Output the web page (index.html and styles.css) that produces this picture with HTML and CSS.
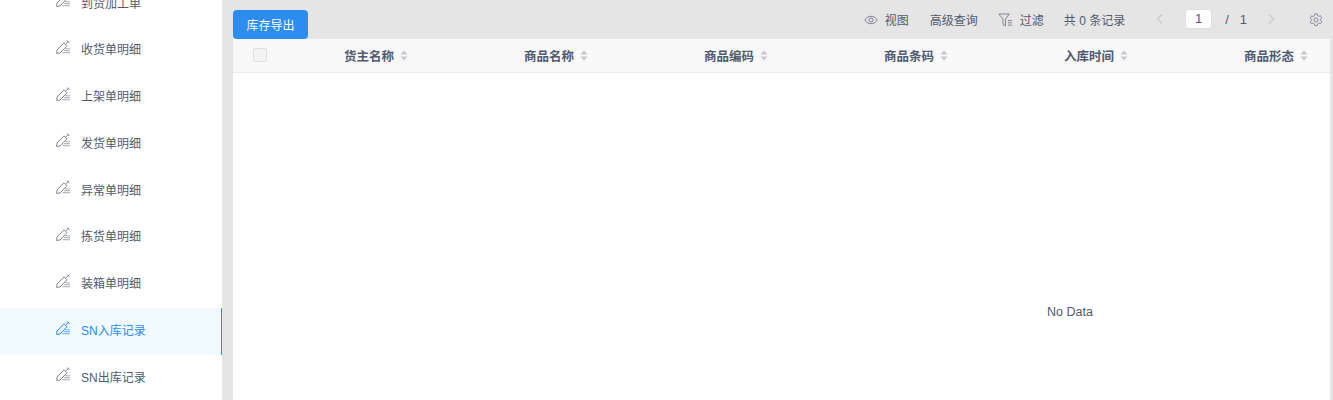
FILE: index.html
```html
<!DOCTYPE html>
<html lang="zh-CN">
<head>
<meta charset="utf-8">
<title>SN入库记录</title>
<link rel="stylesheet" href="styles.css">
</head>
<body>
<svg class="sprite" width="0" height="0" aria-hidden="true">
  <symbol id="i-edit" viewBox="0 0 14 14">
    <path d="M.6 13.400 1 10 8 2.800 11 5.800 4 13z" fill="none" stroke="currentColor" stroke-width="1"/>
    <path d="M9.600 4.200 12.800 1M11 .5l2.500 2.500" fill="none" stroke="currentColor" stroke-width="1"/>
    <path d="M9.200 8.800H14M8 10.700h6M6.400 12.700H14" fill="none" stroke="currentColor" stroke-width=".7"/>
  </symbol>
  <symbol id="i-sort" viewBox="0 0 8 11">
    <path d="M4 .5 7.500 4.500H.5zM4 10.500.5 6.500h7z" fill="currentColor"/>
  </symbol>
</svg>
<div class="app">
  <nav class="side">
    <ul class="menu">
      <li class="item"><svg class="ico"><use href="#i-edit"/></svg><span>到货加工单</span></li>
      <li class="item"><svg class="ico"><use href="#i-edit"/></svg><span>收货单明细</span></li>
      <li class="item"><svg class="ico"><use href="#i-edit"/></svg><span>上架单明细</span></li>
      <li class="item"><svg class="ico"><use href="#i-edit"/></svg><span>发货单明细</span></li>
      <li class="item"><svg class="ico"><use href="#i-edit"/></svg><span>异常单明细</span></li>
      <li class="item"><svg class="ico"><use href="#i-edit"/></svg><span>拣货单明细</span></li>
      <li class="item"><svg class="ico"><use href="#i-edit"/></svg><span>装箱单明细</span></li>
      <li class="item active"><svg class="ico"><use href="#i-edit"/></svg><span>SN入库记录</span></li>
      <li class="item"><svg class="ico"><use href="#i-edit"/></svg><span>SN出库记录</span></li>
    </ul>
  </nav>
  <main class="main">
    <div class="toolbar">
      <button class="btn" type="button">库存导出</button>
      <div class="tools">
        <span class="tool tool-view">
          <svg class="tool-ico" viewBox="0 0 14 14"><path d="M.8 7C2.200 4.600 4.400 3.300 7 3.300S11.800 4.600 13.200 7C11.800 9.400 9.600 10.700 7 10.700S2.200 9.400 .8 7z" fill="none" stroke="currentColor"/><circle cx="7" cy="7" r="2" fill="none" stroke="currentColor"/></svg>
          视图
        </span>
        <span class="tool tool-adv">高级查询</span>
        <span class="tool tool-filter">
          <svg class="tool-ico filter" viewBox="0 0 15 14"><path d="M.7 1h10.600L7.500 6v7L5 11.500V6z" fill="none" stroke="currentColor"/><path d="M10 7.500h4M10 9.800h4M10 12.100h4" fill="none" stroke="currentColor"/></svg>
          过滤
        </span>
        <span class="tool tool-total">共 0 条记录</span>
        <div class="pager">
          <svg class="chev" viewBox="0 0 8 12"><path d="M6 1.500 1.500 6 6 10.500" fill="none" stroke="currentColor" stroke-width="1.200"/></svg>
          <span class="page-box">1</span>
          <span class="slash">/</span>
          <span class="page-total">1</span>
          <svg class="chev" viewBox="0 0 8 12"><path d="M2 1.500 6.500 6 2 10.500" fill="none" stroke="currentColor" stroke-width="1.200"/></svg>
        </div>
        <svg class="gear" viewBox="0 0 14 14"><path d="M5.800 .8h2.400l.4 1.800 1.200.7 1.800-.6 1.200 2.100-1.400 1.200v1.400l1.400 1.200-1.200 2.100-1.800-.6-1.200.7-.4 1.800H5.800l-.4-1.800-1.200-.7-1.800.6L1.200 8.800l1.400-1.200V6.200L1.200 5l1.200-2.100 1.800.6 1.200-.7z" fill="none" stroke="currentColor" stroke-width=".9"/><circle cx="7" cy="6.900" r="2" fill="none" stroke="currentColor" stroke-width=".9"/></svg>
      </div>
    </div>
    <div class="table-wrap">
      <div class="table">
        <div class="thead">
          <div class="th-check"><span class="checkbox"></span></div>
          <div class="th">货主名称<svg class="sort"><use href="#i-sort"/></svg></div>
          <div class="th">商品名称<svg class="sort"><use href="#i-sort"/></svg></div>
          <div class="th">商品编码<svg class="sort"><use href="#i-sort"/></svg></div>
          <div class="th">商品条码<svg class="sort"><use href="#i-sort"/></svg></div>
          <div class="th">入库时间<svg class="sort"><use href="#i-sort"/></svg></div>
          <div class="th">商品形态<svg class="sort"><use href="#i-sort"/></svg></div>
          <div class="th">商品状态<svg class="sort"><use href="#i-sort"/></svg></div>
        </div>
        <div class="tbody"><span class="empty">No Data</span></div>
      </div>
    </div>
  </main>
</div>
</body>
</html>
```
FILE: styles.css
```css
* { box-sizing: border-box; }
html, body { margin: 0; height: 100%; }
body {
  overflow: hidden;
  background: #e5e5e5;
  font-family: "Liberation Sans", "Noto Sans CJK SC", sans-serif;
  font-size: 12px;
  color: #515a6e;
}
.sprite { position: absolute; }
.app { display: flex; height: 400px; overflow: hidden; }

.side { flex: 0 0 222px; background: #fff; overflow: hidden; }
.menu { list-style: none; margin: -19.800px 0 0; padding: 0; }
.item {
  display: flex;
  align-items: center;
  gap: 11px;
  height: 46.800px;
  padding: 0 0 3.200px 56px;
  color: #515a6e;
}
.item.active {
  background: #f0faff;
  color: #2d8cf0;
  border-right: 1px solid #2d8cf0;
}
.ico { width: 14px; height: 14px; flex: none; color: #808695; margin-top: -4px; }
.active .ico { color: #2d8cf0; }

.main { flex: 0 0 1097px; margin-left: 11px; display: flex; flex-direction: column; min-width: 0; }
.toolbar { display: flex; justify-content: space-between; height: 39px; padding-top: 10px; }
.btn {
  width: 75px;
  height: 29px;
  border: 0;
  border-radius: 4px;
  background: #2d8cf0;
  color: #fff;
  font: inherit;
  padding: 0;
}
.tools { display: flex; align-items: center; height: 20px; margin-top: -1px; color: #515a6e; margin-right: 7px; }
.tool { display: flex; align-items: center; white-space: nowrap; }
.tool-ico { width: 14px; height: 14px; margin: 1px 7px 0 0; color: #808695; }
.filter { width: 15px; }
.tool-adv { margin-left: 21px; }
.tool-filter { margin-left: 20px; }
.tool-total { margin-left: 20px; }
.pager { display: flex; align-items: center; margin-left: 31px; color: #515a6e; }
.chev { width: 8px; height: 12px; color: #c5c8ce; }
.page-box {
  width: 27px;
  height: 20px;
  margin-left: 21px;
  background: #fff;
  border: 1px solid #dcdee2;
  border-radius: 4px;
  text-align: center;
  line-height: 18px;
  font-size: 13px;
}
.slash { margin-left: 13px; font-size: 13px; }
.page-total { margin-left: 11px; margin-right: 20px; font-size: 13px; }
.gear { width: 14px; height: 14px; margin: 1px 0 0 34px; color: #808695; }

.table-wrap { flex: 1; background: #fff; overflow: hidden; }
.table { width: 1674px; height: 100%; display: flex; flex-direction: column; }
.thead {
  display: grid;
  grid-template-columns: 111px repeat(7, 180px);
  align-items: center;
  flex: none;
  height: 34px;
  padding-bottom: 1px;
  background: #f8f8f9;
  border-bottom: 1px solid #e8eaec;
}
.th-check { padding-left: 20px; display: flex; align-items: center; }
.checkbox {
  width: 14px;
  height: 14px;
  background: #f3f3f3;
  border: 1px solid #dcdee2;
  border-radius: 2px;
}
.th { display: flex; align-items: center; font-size: 12.500px; font-weight: 700; color: #515a6e; white-space: nowrap; }
.sort { width: 8px; height: 11px; margin-left: 6px; color: #c5c8ce; }
.tbody { flex: 1; display: flex; justify-content: center; padding-top: 231px; }
.empty { font-size: 12.500px; color: #515a6e; line-height: 16px; height: 16px; }
```
